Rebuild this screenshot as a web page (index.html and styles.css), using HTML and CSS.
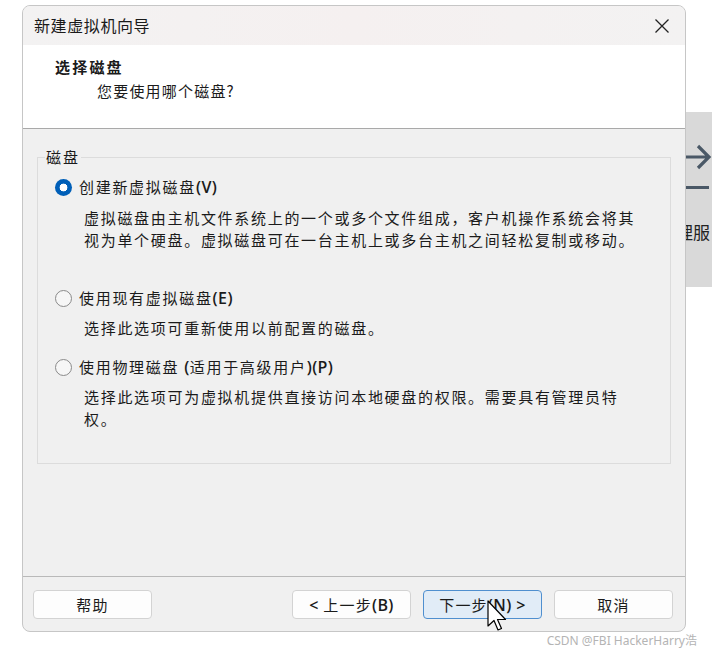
FILE: index.html
```html
<!DOCTYPE html>
<html lang="zh-CN">
<head>
<meta charset="utf-8">
<title>新建虚拟机向导</title>
<link rel="stylesheet" href="styles.css">
</head>
<body>
<div class="stage">
  <div class="side-panel">
    <svg class="side-arrow" width="26" height="30" viewBox="0 0 26 30"><path d="M0 15 H23 M12 4 L23 15 L12 26" fill="none" stroke="#4a5866" stroke-width="3.2"/></svg>
    <div class="side-dash"></div>
    <div class="side-text">理服</div>
  </div>

  <div class="window">
    <div class="titlebar">
      <span class="title">新建虚拟机向导</span>
      <svg class="close" width="14" height="14" viewBox="0 0 14 14"><path d="M0.5 0.5 L13.5 13.5 M13.5 0.5 L0.5 13.5" stroke="#222" stroke-width="1.3" fill="none"/></svg>
    </div>
    <div class="header">
      <div class="h-title">选择磁盘</div>
      <div class="h-sub">您要使用哪个磁盘?</div>
    </div>
    <div class="content">
      <fieldset class="group">
        <legend class="legend">磁盘</legend>
        <div class="options">
          <div class="opt-row r1"><span class="radio checked"></span><span class="opt-label">创建新虚拟磁盘<span class="lat">(V)</span></span></div>
          <div class="desc d1">虚拟磁盘由主机文件系统上的一个或多个文件组成，客户机操作系统会将其<br>视为单个硬盘。虚拟磁盘可在一台主机上或多台主机之间轻松复制或移动。</div>
          <div class="opt-row r2"><span class="radio"></span><span class="opt-label">使用现有虚拟磁盘<span class="lat">(E)</span></span></div>
          <div class="desc d2">选择此选项可重新使用以前配置的磁盘。</div>
          <div class="opt-row r3"><span class="radio"></span><span class="opt-label">使用物理磁盘 <span class="lat">(</span>适用于高级用户<span class="lat">)(P)</span></span></div>
          <div class="desc d3">选择此选项可为虚拟机提供直接访问本地硬盘的权限。需要具有管理员特<br>权。</div>
        </div>
      </fieldset>
    </div>
    <div class="footer">
      <button class="btn">帮助</button>
      <div class="btn-group">
        <button class="btn"><span class="lat">&lt;</span> 上一步<span class="lat">(B)</span></button>
        <button class="btn primary">下一步<span class="lat">(N) &gt;</span></button>
        <button class="btn">取消</button>
      </div>
    </div>
  </div>

  <div class="watermark">CSDN @FBI HackerHarry浩</div>

  <svg class="cursor" width="20" height="32" viewBox="0 0 20 32"><path d="M1 1 L1 26 L7 20.5 L11 30 L14.5 28.5 L10.5 19.5 L18.5 19.5 Z" fill="#fff" stroke="#000" stroke-width="1.2" stroke-linejoin="round"/></svg>
</div>
</body>
</html>
```

FILE: styles.css
```css
* { box-sizing: border-box; }
html, body { margin: 0; padding: 0; background: #fff; }
body {
  font-family: "Noto Sans CJK SC", "Noto Sans", sans-serif;
  color: #1b1b1b;
}
.stage {
  position: relative;
  width: 712px;
  height: 654px;
  overflow: hidden;
  padding-top: 5px;
}
.side-panel {
  position: absolute;
  left: 686px;
  top: 112px;
  width: 26px;
  height: 175px;
  background: #d9d9d9;
}
.side-arrow { position: absolute; left: 0; top: 30px; }
.side-dash {
  position: absolute;
  left: 0;
  top: 74px;
  width: 23px;
  height: 3px;
  background: #4a5866;
}
.side-text {
  position: absolute;
  left: -10px;
  top: 109px;
  font-size: 17px;
  line-height: 22px;
  white-space: nowrap;
  color: #222;
}
.window {
  position: relative;
  z-index: 1;
  margin-left: 22px;
  width: 664px;
  height: 627px;
  border: 1px solid #c6c6c6;
  border-radius: 8px;
  overflow: hidden;
  display: flex;
  flex-direction: column;
  background: #f0f0f0;
}
.titlebar {
  height: 39px;
  flex: none;
  display: flex;
  align-items: center;
  justify-content: space-between;
  padding: 0 16px 0 11px;
  background: linear-gradient(90deg, #f3f2f2 0%, #f5f0f0 50%, #f3f2f2 100%);
}
.title {
  font-size: 16px;
  letter-spacing: 0.6px;
  color: #1a1a1a;
  margin-top: -1px;
}
.close { display: block; }
.header {
  height: 84px;
  flex: none;
  background: #fff;
  border-bottom: 1px solid #a9a9a9;
  padding: 11px 0 0 32px;
}
.h-title {
  font-size: 15px;
  font-weight: 700;
  line-height: 22px;
  letter-spacing: 2.2px;
}
.h-sub {
  font-size: 15px;
  line-height: 22px;
  letter-spacing: 1.2px;
  margin: 2px 0 0 42px;
}
.content {
  flex: 1;
  padding: 18px 14px 0 14px;
}
.group {
  margin: 0;
  padding: 0;
  border: 1px solid #dcdcdc;
  min-width: 0;
}
.legend {
  margin-left: 7px;
  padding: 0 1px;
  font-size: 15px;
  line-height: 20px;
  letter-spacing: 2px;
}
.options {
  height: 296px;
  padding-top: 9px;
}
.opt-row {
  display: flex;
  align-items: center;
  height: 22px;
  padding-left: 17px;
}
.radio {
  width: 17px;
  height: 17px;
  border-radius: 50%;
  border: 1px solid #8a8a8a;
  background: #f6f6f6;
  flex: none;
}
.radio.checked {
  border: none;
  background: radial-gradient(circle, #fff 0 3.6px, #005fb8 4.2px);
}
.opt-label {
  margin-left: 7px;
  font-size: 15px;
  letter-spacing: 1.7px;
}
.lat {
  font-family: "Open Sans", "Noto Sans", sans-serif;
  font-size: 16px;
  font-weight: 600;
  letter-spacing: 0.4px;
}
.desc {
  font-size: 15px;
  line-height: 22px;
  letter-spacing: 1.7px;
  padding-left: 46px;
  white-space: nowrap;
}
.d1 { margin-top: 9px; }
.r2 { margin-top: 36px; }
.d2 { margin-top: 8px; }
.r3 { margin-top: 17px; }
.d3 { margin-top: 8px; }
.footer {
  height: 55px;
  flex: none;
  border-top: 1px solid #b9b9b9;
  display: flex;
  justify-content: space-between;
  align-items: flex-start;
  padding: 13px 12px 0 10px;
}
.btn-group { display: flex; gap: 12px; }
.btn {
  width: 119px;
  height: 29px;
  margin: 0;
  padding: 0;
  font-family: inherit;
  font-size: 15px;
  letter-spacing: 1.2px;
  color: #1b1b1b;
  background: #fdfdfd;
  border: 1px solid #d3d3d3;
  border-radius: 4px;
}
.btn.primary {
  background: #e1ecf7;
  border-color: #4f8fcf;
}
.watermark {
  text-align: right;
  padding-right: 15px;
  margin-top: 1px;
  font-family: "Noto Sans", sans-serif;
  font-size: 12px;
  line-height: 16px;
  color: #b4b4b4;
}
.cursor {
  position: absolute;
  left: 487px;
  top: 600px;
  z-index: 2;
}
```
